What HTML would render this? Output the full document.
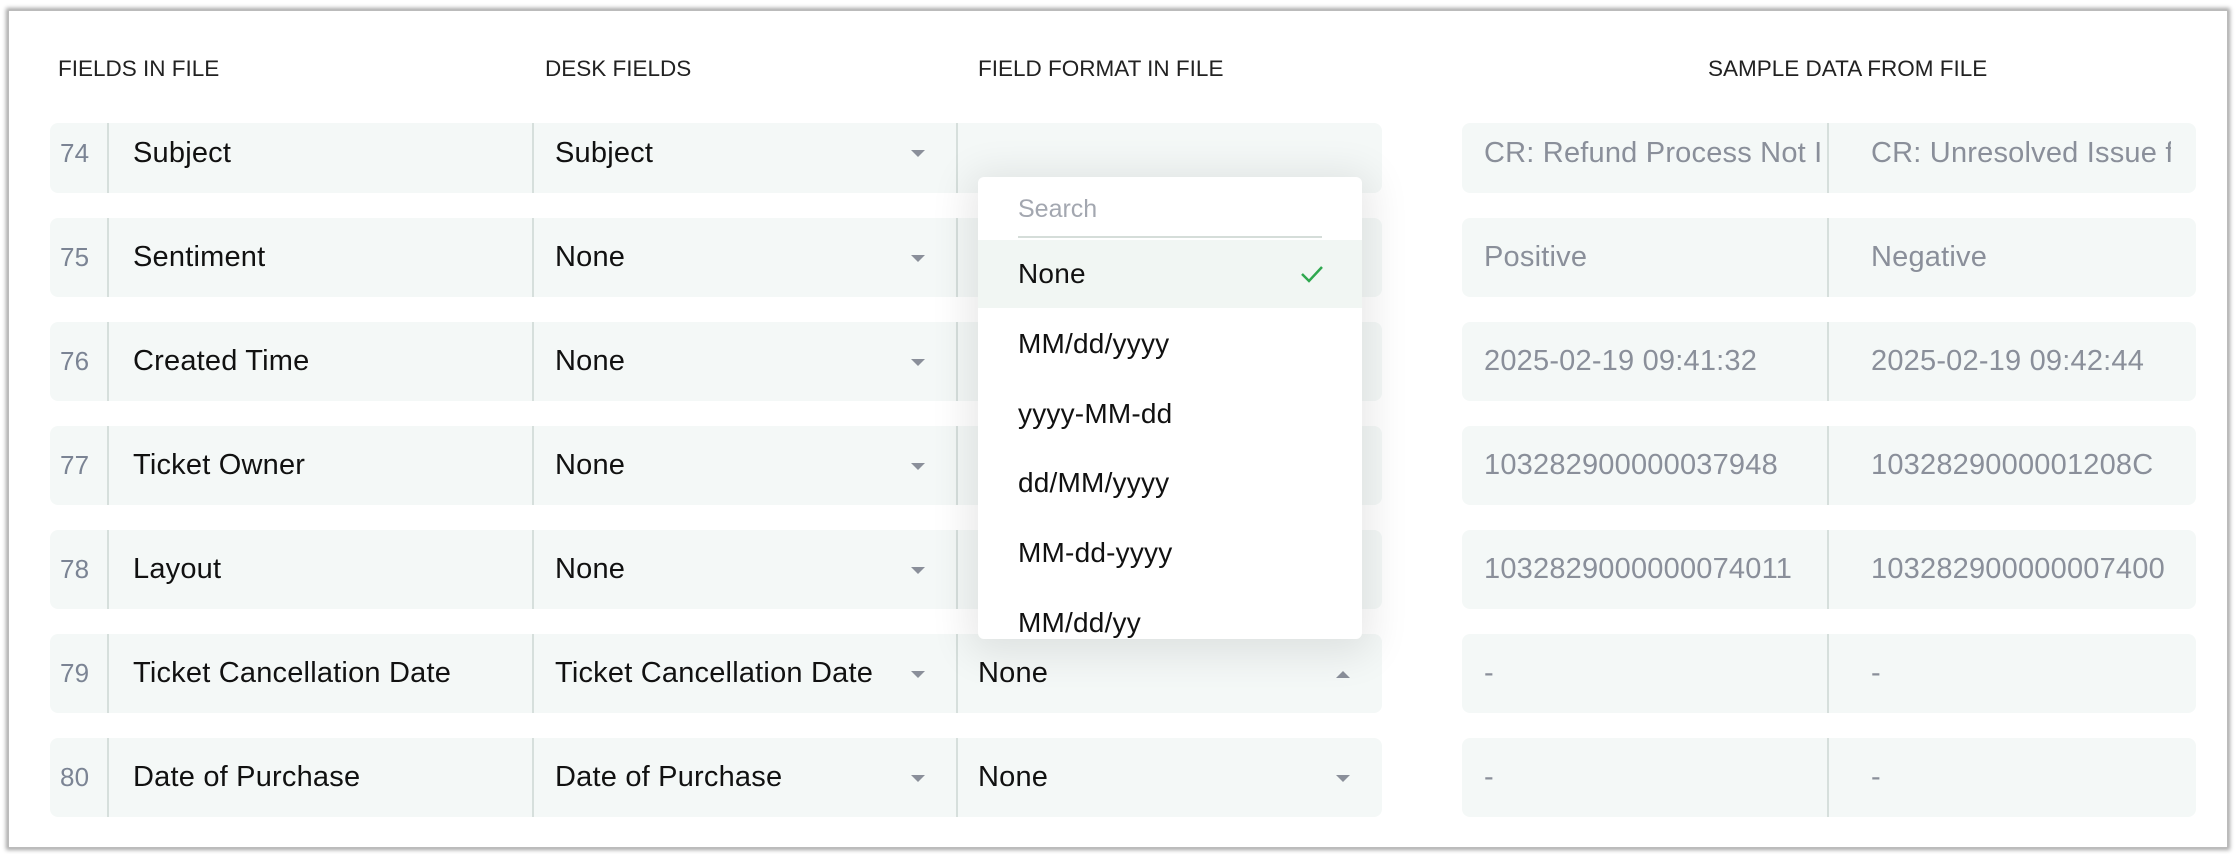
<!DOCTYPE html>
<html><head><style>
body{margin:0;width:2236px;height:854px;background:#fff;font-family:"Liberation Sans",sans-serif;position:relative;overflow:hidden}
.frame{position:absolute;left:8px;top:10px;width:2218px;height:836px;border:1px solid #bbb;box-shadow:0 0 4px 2px rgba(0,0,0,.35);background:#fff}
.h{position:absolute;top:56px;font-size:22.5px;color:#222}
.row{position:absolute;height:79px}
.blk{position:absolute;background:#f4f8f7;border-radius:8px;height:100%}
.c{position:absolute;top:0;height:100%;display:flex;align-items:center;font-size:29px;color:#111;white-space:nowrap;overflow:hidden;letter-spacing:0.2px}
.num{color:#7b8494;font-size:26px}
.dv{position:absolute;top:0;width:2px;height:100%;background:#d6dfdc}
.ar{position:absolute;width:0;height:0;border-left:7px solid transparent;border-right:7px solid transparent;border-top:7px solid #8a8f9a}
.up{border-top:none;border-bottom:7px solid #8a8f9a}
.s{color:#8a8f9a}
.dd{position:absolute;left:978px;top:177px;width:384px;height:462px;background:#fff;border-radius:6px;box-shadow:0 6px 40px 10px rgba(0,0,0,.09);overflow:hidden}
.it{position:absolute;left:40px;font-size:28px;color:#111;letter-spacing:0.2px}
</style></head><body>
<div class="frame"></div>
<div class="h" style="left:58px">FIELDS IN FILE</div>
<div class="h" style="left:545px">DESK FIELDS</div>
<div class="h" style="left:978px">FIELD FORMAT IN FILE</div>
<div class="h" style="left:1708px">SAMPLE DATA FROM FILE</div>
<div id="rows"></div>
<script>
var d=[["74","Subject","Subject","","CR: Refund Process Not In","CR: Unresolved Issue f",123,70],
["75","Sentiment","None","","Positive","Negative",218,79],
["76","Created Time","None","","2025-02-19 09:41:32","2025-02-19 09:42:44",322,79],
["77","Ticket Owner","None","","103282900000037948","1032829000001208C",426,79],
["78","Layout","None","","1032829000000074011","103282900000007400",530,79],
["79","Ticket Cancellation Date","Ticket Cancellation Date","None","-","-",634,79],
["80","Date of Purchase","Date of Purchase","None","-","-",738,79]];
var h="";
d.forEach(function(r,i){
var t=r[6],H=r[7],mid=H/2;
var sh=i==0?'transform:translateY(-5px);':'';
h+='<div class="row" style="top:'+t+'px;left:0;width:2236px;height:'+H+'px">';
h+='<div class="blk" style="left:50px;width:1332px"></div>';
h+='<div class="blk" style="left:1462px;width:734px"></div>';
h+='<div class="c num" style="'+sh+'left:60px;width:40px">'+r[0]+'</div>';
h+='<div class="dv" style="left:107px"></div>';
h+='<div class="c" style="'+sh+'left:133px;width:390px">'+r[1]+'</div>';
h+='<div class="dv" style="left:532px"></div>';
h+='<div class="c" style="'+sh+'left:555px;width:350px">'+r[2]+'</div>';
h+='<div class="ar" style="left:911px;top:'+(mid-3-(i==0?5:0))+'px"></div>';
h+='<div class="dv" style="left:956px"></div>';
if(r[3]){h+='<div class="c" style="left:978px">'+r[3]+'</div>';
h+='<div class="ar'+(i==5?' up':'')+'" style="left:1336px;top:'+(mid-3)+'px"></div>';}
h+='<div class="c s" style="'+sh+'left:1484px;width:336px">'+r[4]+'</div>';
h+='<div class="dv" style="left:1827px"></div>';
h+='<div class="c s" style="'+sh+'left:1871px;width:300px">'+r[5]+'</div>';
h+='</div>';});
document.getElementById("rows").innerHTML=h;
</script>
<div class="dd">
<div style="position:absolute;left:40px;top:18px;font-size:25px;color:#a3a7b0">Search</div>
<div style="position:absolute;left:40px;top:59px;width:304px;height:2px;background:#d5ddd9"></div>
<div style="position:absolute;left:0;top:63px;width:384px;height:68px;background:#f1f6f3"></div>
<div class="it" style="top:81px">None</div>
<svg style="position:absolute;left:322px;top:87px" width="24" height="20" viewBox="0 0 24 20"><path d="M2 10 L9 17 L22 3" fill="none" stroke="#2fa84f" stroke-width="2.5"/></svg>
<div class="it" style="top:151px">MM/dd/yyyy</div>
<div class="it" style="top:221px">yyyy-MM-dd</div>
<div class="it" style="top:290px">dd/MM/yyyy</div>
<div class="it" style="top:360px">MM-dd-yyyy</div>
<div class="it" style="top:430px">MM/dd/yy</div>
</div>
</body></html>
